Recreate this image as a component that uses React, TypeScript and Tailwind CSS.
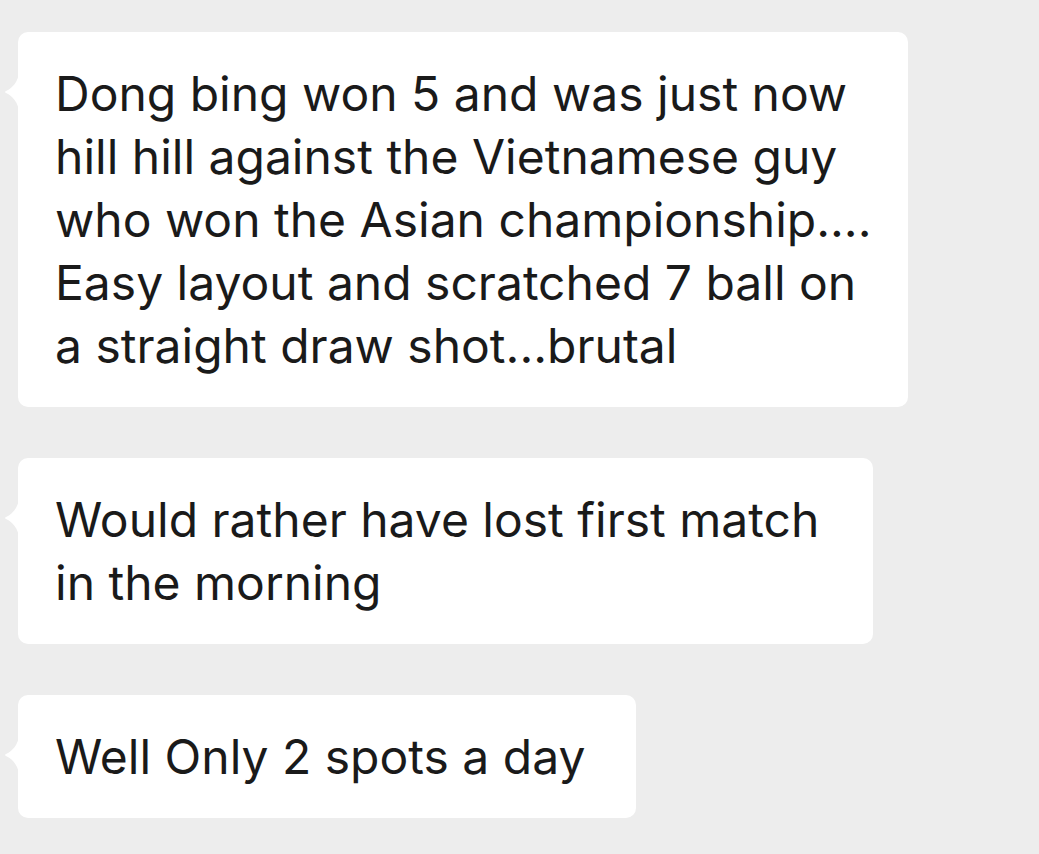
import React from 'react';

const messages = [
  {
    width: 'w-[890px]',
    lines: [
      'Dong bing won 5 and was just now',
      'hill hill against the Vietnamese guy',
      'who won the Asian championship....',
      'Easy layout and scratched 7 ball on',
      'a straight draw shot...brutal',
    ],
  },
  {
    width: 'w-[855px]',
    lines: ['Would rather have lost first match', 'in the morning'],
  },
  {
    width: 'w-[618px]',
    lines: ['Well Only 2 spots a day'],
  },
];

// little pointer on the left edge of each bubble
const Tail: React.FC = () => (
  <svg
    className="absolute left-[-15px] top-[41px]"
    width="16"
    height="38"
    viewBox="0 0 16 38"
  >
    <path d="M16 0 C15 8 10 15 3 18 Q1 19 3 20 C10 23 15 30 16 38 Z" fill="#ffffff" />
  </svg>
);

export default function App() {
  return (
    <div className="min-h-screen w-full bg-[#ededed] pt-[32px] pl-[18px]">
      <div className="flex flex-col items-start gap-[51px]">
        {messages.map((m, i) => (
          <div
            key={i}
            className={`relative ${m.width} rounded-[10px] bg-white pl-[37px] py-[30px] text-[#1a1a1a] text-[48px] leading-[63px]`}
            style={{ fontFamily: 'Inter, "Noto Sans", sans-serif' }}
          >
            <Tail />
            {m.lines.map((l, j) => (
              <div key={j} className="whitespace-nowrap">
                {l}
              </div>
            ))}
          </div>
        ))}
      </div>
    </div>
  );
}
